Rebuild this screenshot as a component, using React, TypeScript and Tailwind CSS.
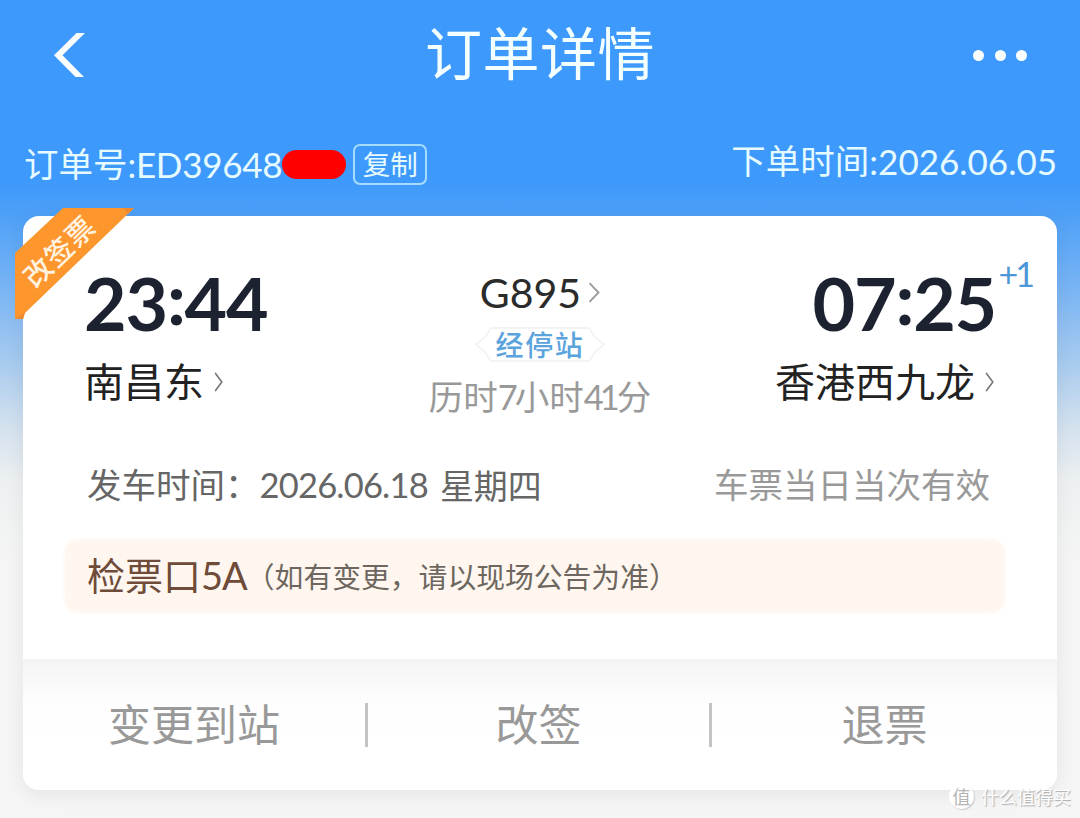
import clsx from 'clsx'

const FONT = "font-['Lato','Noto_Sans_CJK_SC',sans-serif]"

const actions = [
  { label: '变更到站', className: 'w-[342px]' },
  { label: '改签', className: 'w-[344px]' },
  { label: '退票', className: 'flex-1' },
]

type ArrowProps = { className: string; width?: number }

function ArrowRight({ className, width = 1.8 }: ArrowProps) {
  return (
    <svg className={className} viewBox="0 0 12 20" fill="none" preserveAspectRatio="none">
      <path d="M1.5 1 L10.5 10 L1.5 19" stroke="currentColor" strokeWidth={width} />
    </svg>
  )
}

function Header() {
  return (
    <header className="flex h-[110px] items-center justify-between pl-[53px] pr-[53px] text-white">
      <svg className="h-[46px] w-[54px]" viewBox="0 0 54 46" fill="none">
        <path d="M23.5 1 H32 L9.5 23.3 L31 45 H22.5 L1 23.3 Z" fill="#fafeff" />
      </svg>
      <h1 className="pb-[4px] text-[57px] leading-none tracking-[0.5px] text-[#f4ffff]">订单详情</h1>
      <div className="flex w-[54px] justify-between">
        {[0, 1, 2].map((i) => (
          <span key={i} className="size-[11px] rounded-full bg-[#fafeff]" />
        ))}
      </div>
    </header>
  )
}

function OrderInfo() {
  return (
    <div className="flex h-[106px] justify-between pl-[24px] pr-[23px] text-[#e6fbff]">
      <div className="flex h-[109px] items-center whitespace-nowrap leading-none">
        <span className="text-[34.5px]">订单号</span>
        <span className="text-[35px] tracking-[-0.3px]">:ED39648</span>
        <span className="h-[29px] w-[64px] rounded-full bg-[#fe0000]" />
        <button className="ml-[7px] flex h-[41px] w-[74px] items-center justify-center rounded-[7px] border-2 border-[#a5dcff] text-[27.5px]">
          复制
        </button>
      </div>
      <div className="flex h-[102px] items-center whitespace-nowrap leading-none">
        <span className="text-[34.5px]">下单时间</span>
        <span className="text-[35px]">:2026.06.05</span>
      </div>
    </div>
  )
}

function Ribbon() {
  return (
    <div className="absolute -left-[8px] -top-[8px] h-[112px] w-[120px]">
      <svg className="h-full w-full" viewBox="0 0 120 112">
        <path d="M48 0 H119 L10 105 L8 111 H0 V45 Z" fill="#fd962c" />
        <path d="M108 0 H119 L113 6 Z M0 111 H8 L10 104 Z" fill="#f18a2c" />
      </svg>
      <span className="absolute left-[44px] top-[43px] -translate-x-1/2 -translate-y-1/2 -rotate-[44deg] whitespace-nowrap text-[28px] font-medium leading-none tracking-[1px] text-[#fff3e0]">
        改签票
      </span>
    </div>
  )
}

function Time({ hour, minute }: { hour: string; minute: string }) {
  return (
    <div className="flex h-[70px] items-center whitespace-nowrap text-[73.5px] font-bold leading-none tracking-[-1.2px] text-[#1d2230]">
      <span>
        {hour}
        <span className="align-[6px]">:</span>
        {minute}
      </span>
    </div>
  )
}

function Station({ name }: { name: string }) {
  return (
    <div className="flex h-[50px] items-center whitespace-nowrap text-[40px] leading-none text-[#222]">
      {name}
      <ArrowRight className="ml-[10px] h-[20px] w-[9px] text-[#777]" />
    </div>
  )
}

function Trip() {
  return (
    <section className="flex h-[226px] justify-between pl-[61px] pr-[63px]">
      <div className="w-[300px] pt-[49px]">
        <Time hour="23" minute="44" />
        <div className="mt-[22px]">
          <Station name="南昌东" />
        </div>
      </div>

      <div className="ml-[2px] flex w-[230px] flex-col items-center pt-[51px]">
        <div className="flex h-[50px] items-center text-[41px] leading-none text-[#2b2b2b]">
          G895
          <ArrowRight className="ml-[7px] h-[21px] w-[12px] text-[#999]" />
        </div>
        <div className="mt-[10px] grid h-[35px] w-[130px] place-items-center">
          <svg className="col-start-1 row-start-1 h-[35px] w-[130px]" viewBox="0 0 130 35" fill="none">
            <path
              d="M16 1 H114 L120 10 L129 17.5 L120 25 L114 34 H16 L10 25 L1 17.5 L10 10 Z"
              stroke="#f1f3f5"
              strokeWidth="1.8"
            />
          </svg>
          <span className="col-start-1 row-start-1 text-[28px] font-medium leading-none tracking-[1.6px] text-[#5aa3dd]">
            经停站
          </span>
        </div>
        <div className="mt-[8px] flex h-[54px] items-center whitespace-nowrap text-[34.5px] leading-none text-[#999]">
          历时<span className="tracking-[-3px]">7</span>小时
          <span className="mr-[1px] tracking-[-4px]">41</span>分
        </div>
      </div>

      <div className="flex w-[300px] flex-col items-end pt-[49px]">
        <div className="relative -mr-[2px]">
          <Time hour="07" minute="25" />
          <span className="absolute -right-[36px] -top-[8px] text-[34px] leading-none tracking-[-3px] text-[#4c97d6]">
            +1
          </span>
        </div>
        <div className="mt-[22px]">
          <Station name="香港西九龙" />
        </div>
      </div>
    </section>
  )
}

function Departure() {
  return (
    <section className="flex h-[87px] items-center justify-between whitespace-nowrap pl-[64px] pr-[67px] text-[34.5px] leading-none">
      <div className="flex items-center text-[#666]">
        <span>发车时间：</span>
        <span className="tracking-[-0.8px]">2026.06.18</span>
        <span className="ml-[12px] text-[34px]">星期四</span>
      </div>
      <span className="text-[#999]">车票当日当次有效</span>
    </section>
  )
}

function Gate() {
  return (
    <section className="ml-[42px] mt-[11px] flex h-[72px] w-[939px] items-center whitespace-nowrap rounded-[12px] bg-[#fff7ef] pl-[22px] leading-none shadow-[0_0_4px_#fff7ef]">
      <span className="pb-[2px] text-[38px] text-[#6f4b3a]">
        检票口<span className="tracking-[-1px]">5A</span>
      </span>
      <span className="-ml-px pt-[3px] text-[28.8px] text-[#6e675f]">（如有变更，请以现场公告为准）</span>
    </section>
  )
}

function Actions() {
  return (
    <footer className="mt-[47px] flex h-[131px] items-center rounded-b-[16px] bg-linear-to-b from-[#f4f4f4] via-[#fdfdfd] via-30% to-white to-60%">
      {actions.map((action, i) => (
        <div key={action.label} className={clsx('flex items-center', action.className)}>
          {i > 0 && <span className="h-[44px] w-[3px] bg-[#c4c4c4]" />}
          <button className="flex-1 text-center text-[43px] leading-none text-[#999]">
            {action.label}
          </button>
        </div>
      ))}
    </footer>
  )
}

function Watermark() {
  return (
    <div className="absolute bottom-[9px] right-[9px] flex items-center gap-[7px] leading-none text-white">
      <span className="grid size-[25px] place-items-center rounded-full bg-white text-[18px] text-[#b5b5b5] shadow-[1px_1px_1px_#ccc]">
        值
      </span>
      <span className="text-[18px] [text-shadow:1px_1px_1px_#aaa]">什么值得买</span>
    </div>
  )
}

export default function App() {
  return (
    <div
      className={clsx(
        'relative h-[818px] w-[1080px] overflow-hidden bg-[linear-gradient(180deg,#3d99fb_0px,#3d99fb_180px,#4b9ff8_210px,#7ab5f4_290px,#a6caef_360px,#d3e1ef_425px,#edf0f1_480px,#f5f5f5_560px)]',
        FONT,
      )}
    >
      <Header />
      <OrderInfo />
      <main className="relative mx-[23px] h-[574px] rounded-[16px] bg-white shadow-[0_4px_20px_rgba(0,0,0,0.07)]">
        <Trip />
        <Departure />
        <Gate />
        <Actions />
        <Ribbon />
      </main>
      <Watermark />
    </div>
  )
}
